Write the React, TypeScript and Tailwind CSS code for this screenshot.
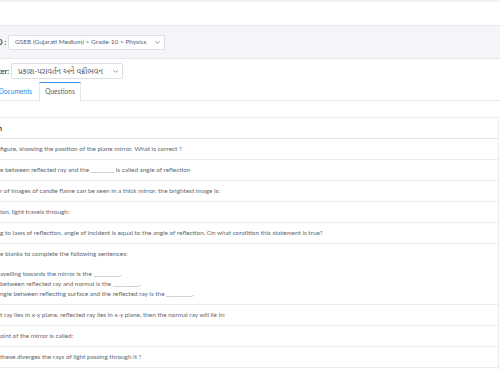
import { ChevronDown } from "lucide-react";

const questions: (string | string[])[] = [
  "figure, showing the position of the plane mirror. What is correct ?",
  "e between reflected ray and the ________ is called angle of reflection",
  "r of images of candle flame can be seen in a thick mirror. the brightest  image is:",
  "ion, light travels through:",
  "g to laws of reflection, angle of incident is equal to the angle of reflection. On what condition this statement is true?",
  [
    "e blanks to complete the following sentences:",
    "",
    "avelling towards the mirror is the _________.",
    "between reflected ray and normal is the _________.",
    "ngle between reflecting surface and the reflected ray is the _________.",
  ],
  "t ray lies in x-y plane, reflected ray lies in x-y plane, then the normal ray will lie in:",
  "oint of the mirror is called:",
  "these diverges the rays of light passing through it ?",
  "",
];

export default function App() {
  return (
    <div
      className="w-[500px] h-[370px] overflow-hidden bg-white text-[#63676e]"
      style={{ fontFamily: "Lato, 'Noto Sans Gujarati', 'Lohit Gujarati', sans-serif" }}
    >
      <div className="h-[2px] bg-[#f1f2f4]" />
      <div className="h-[23px]" />

      {/* course selector band */}
      <div className="h-[34px] bg-[#f4f5f9] border-y border-[#e8e9ee] flex items-center">
        <div className="-ml-[40px] w-[46px] text-right text-[7px] font-bold text-[#444]">STD :</div>
        <div className="ml-[2px] w-[157px] h-[15px] bg-white border border-[#dcdfe4] rounded-[2px] flex items-center justify-between pl-[6px] pr-[3px] text-[6.5px] text-[#5c6067]">
          <span>GSEB (Gujarati Medium) &gt; Grade-10 &gt; Physics</span>
          <ChevronDown size={7} strokeWidth={2.5} className="text-[#666]" />
        </div>
      </div>

      {/* chapter */}
      <div className="h-[24px] flex items-center">
        <div className="-ml-[40px] w-[49px] text-right text-[7px] font-bold text-[#444]">Chapter:</div>
        <div className="ml-[2px] w-[112px] h-[16px] bg-white border border-[#dcdfe4] rounded-[2px] flex items-center justify-between pl-[6px] pr-[3px] text-[8px] text-[#5c6067]">
          <span>પ્રકાશ-પરાવર્તન અને વક્રીભવન</span>
          <ChevronDown size={7} strokeWidth={2.5} className="text-[#666]" />
        </div>
      </div>

      {/* tabs */}
      <div className="h-[18px] flex items-end border-b border-[#e3e5e9]">
        <div className="-ml-[8px] w-[47px] h-full flex items-center justify-center text-[6.6px] text-[#2b8ae6]">
          Documents
        </div>
        <div className="w-[42px] h-[19px] -mb-px bg-white border-x border-[#e3e5e9] border-t-[1.5px] border-t-[#3a90e6] flex items-center justify-center text-[6.6px] text-[#5c6067]">
          Questions
        </div>
      </div>

      <div className="h-[16px]" />

      {/* table */}
      <div className="w-[499px] border-t border-r border-[#ececef]">
        <div className="h-[21px] border-b-[1.5px] border-[#dfe1e6] flex items-center">
          <span className="-ml-[2px] text-[7px] font-bold text-[#333]">n</span>
        </div>
        {questions.map((q, i) => (
          <div key={i} className="border-b border-[#ececef] py-[5px] leading-[10px] text-[6.4px] whitespace-nowrap min-h-[21px]">
            {Array.isArray(q)
              ? q.map((line, j) => <div key={j} className="h-[10px]">{line}</div>)
              : <div className="h-[10px]">{q}</div>}
          </div>
        ))}
      </div>
    </div>
  );
}
